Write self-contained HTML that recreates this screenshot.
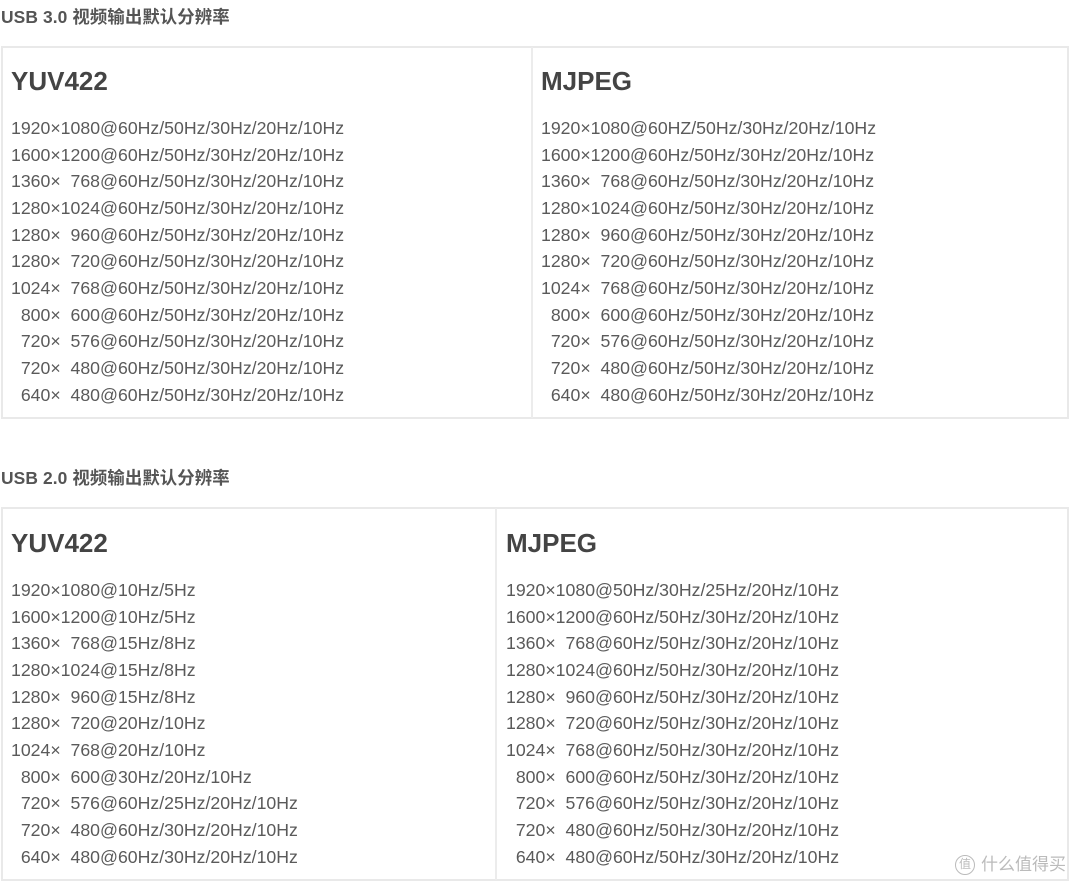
<!DOCTYPE html>
<html><head><meta charset="utf-8"><style>
*{margin:0;padding:0;box-sizing:border-box}
body{width:1080px;height:884px;background:#fff;position:relative;overflow:hidden;font-family:"Liberation Sans","Noto Sans CJK SC",sans-serif;color:#555}
.t{position:absolute;left:1px;font-size:17.4px;font-weight:bold;color:#555;letter-spacing:0.1px}
.box{position:absolute;border:2px solid #e9e9e9}
.div{position:absolute;width:2px;background:#ececec}
.h{position:absolute;font-size:26px;font-weight:bold;color:#444}
.l{position:absolute;font-size:17.7px;line-height:26.65px;white-space:pre;color:#5a5a5a}
.wm{position:absolute;right:14px;top:850px;font-size:17px;color:#bbb}
.wm span{display:inline-block;width:20px;height:20px;border:1.5px solid #bbb;border-radius:50%;font-size:12px;text-align:center;line-height:17px;margin-right:6px;vertical-align:2px}
</style></head><body>
<div class="t" style="top:4px">USB 3.0 视频输出默认分辨率</div>
<div class="box" style="left:1px;top:46px;width:1068px;height:373px"></div>
<div class="div" style="left:531px;top:47px;height:371px"></div>
<div class="h" style="left:11px;top:66px">YUV422</div>
<div class="h" style="left:541px;top:66px">MJPEG</div>
<div class="l" style="left:11px;top:115px">1920×1080@60Hz/50Hz/30Hz/20Hz/10Hz
1600×1200@60Hz/50Hz/30Hz/20Hz/10Hz
1360×  768@60Hz/50Hz/30Hz/20Hz/10Hz
1280×1024@60Hz/50Hz/30Hz/20Hz/10Hz
1280×  960@60Hz/50Hz/30Hz/20Hz/10Hz
1280×  720@60Hz/50Hz/30Hz/20Hz/10Hz
1024×  768@60Hz/50Hz/30Hz/20Hz/10Hz
  800×  600@60Hz/50Hz/30Hz/20Hz/10Hz
  720×  576@60Hz/50Hz/30Hz/20Hz/10Hz
  720×  480@60Hz/50Hz/30Hz/20Hz/10Hz
  640×  480@60Hz/50Hz/30Hz/20Hz/10Hz</div>
<div class="l" style="left:541px;top:115px">1920×1080@60HZ/50Hz/30Hz/20Hz/10Hz
1600×1200@60Hz/50Hz/30Hz/20Hz/10Hz
1360×  768@60Hz/50Hz/30Hz/20Hz/10Hz
1280×1024@60Hz/50Hz/30Hz/20Hz/10Hz
1280×  960@60Hz/50Hz/30Hz/20Hz/10Hz
1280×  720@60Hz/50Hz/30Hz/20Hz/10Hz
1024×  768@60Hz/50Hz/30Hz/20Hz/10Hz
  800×  600@60Hz/50Hz/30Hz/20Hz/10Hz
  720×  576@60Hz/50Hz/30Hz/20Hz/10Hz
  720×  480@60Hz/50Hz/30Hz/20Hz/10Hz
  640×  480@60Hz/50Hz/30Hz/20Hz/10Hz</div>

<div class="t" style="top:465px">USB 2.0 视频输出默认分辨率</div>
<div class="box" style="left:1px;top:507px;width:1068px;height:374px"></div>
<div class="div" style="left:495px;top:508px;height:372px"></div>
<div class="h" style="left:11px;top:528px">YUV422</div>
<div class="h" style="left:506px;top:528px">MJPEG</div>
<div class="l" style="left:11px;top:577px">1920×1080@10Hz/5Hz
1600×1200@10Hz/5Hz
1360×  768@15Hz/8Hz
1280×1024@15Hz/8Hz
1280×  960@15Hz/8Hz
1280×  720@20Hz/10Hz
1024×  768@20Hz/10Hz
  800×  600@30Hz/20Hz/10Hz
  720×  576@60Hz/25Hz/20Hz/10Hz
  720×  480@60Hz/30Hz/20Hz/10Hz
  640×  480@60Hz/30Hz/20Hz/10Hz</div>
<div class="l" style="left:506px;top:577px">1920×1080@50Hz/30Hz/25Hz/20Hz/10Hz
1600×1200@60Hz/50Hz/30Hz/20Hz/10Hz
1360×  768@60Hz/50Hz/30Hz/20Hz/10Hz
1280×1024@60Hz/50Hz/30Hz/20Hz/10Hz
1280×  960@60Hz/50Hz/30Hz/20Hz/10Hz
1280×  720@60Hz/50Hz/30Hz/20Hz/10Hz
1024×  768@60Hz/50Hz/30Hz/20Hz/10Hz
  800×  600@60Hz/50Hz/30Hz/20Hz/10Hz
  720×  576@60Hz/50Hz/30Hz/20Hz/10Hz
  720×  480@60Hz/50Hz/30Hz/20Hz/10Hz
  640×  480@60Hz/50Hz/30Hz/20Hz/10Hz</div>
<div class="wm"><span>值</span>什么值得买</div>
</body></html>
